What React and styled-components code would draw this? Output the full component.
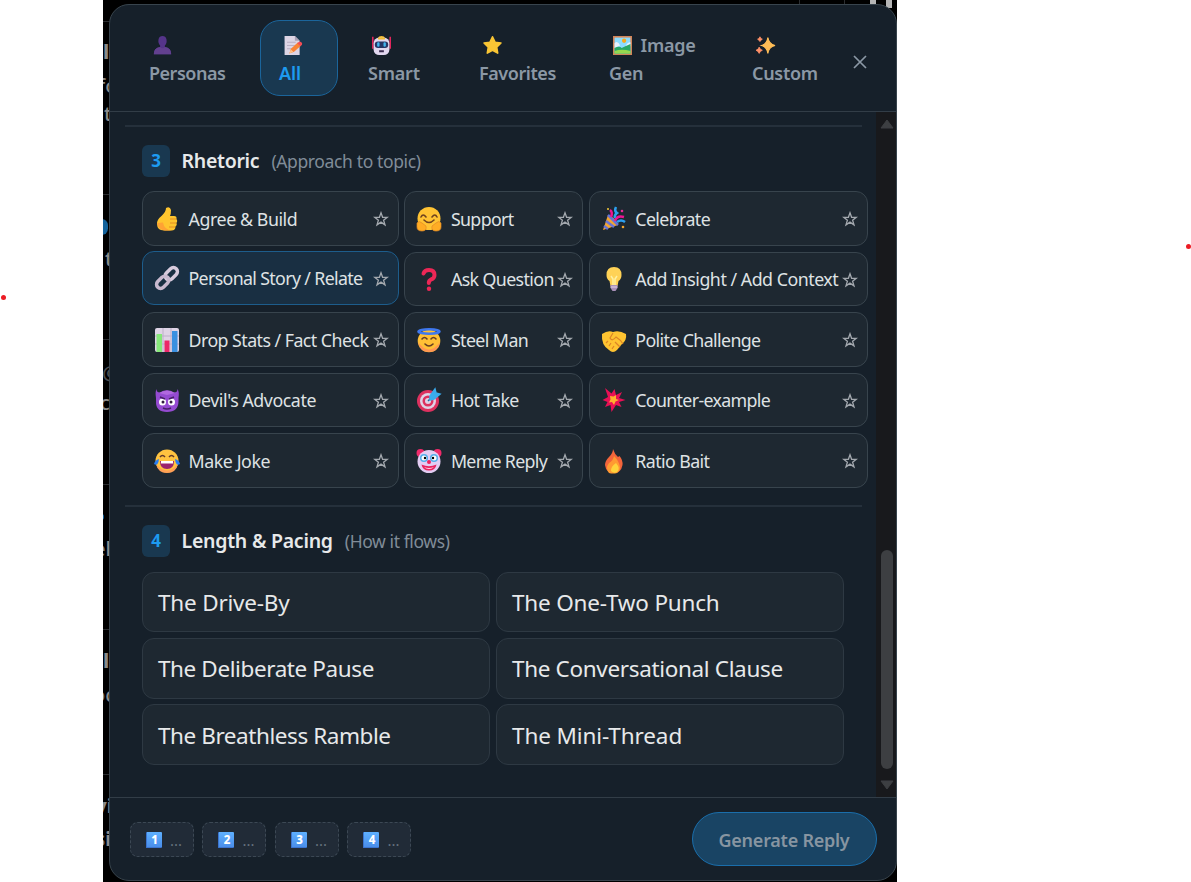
import React from "react";
import styled, { createGlobalStyle, css } from "styled-components";

const Global = createGlobalStyle`
  * { box-sizing: border-box; }
  body { margin: 0; background: #fff; font-family: "Noto Sans", "Open Sans", sans-serif; }
  button { font-family: inherit; margin: 0; cursor: pointer; }
`;

const Stage = styled.div`
  position: relative;
  width: 1191px;
  height: 882px;
  overflow: hidden;
  background: #fff;
  padding-left: 103px;
`;
const Dot = styled.i`
  position: absolute;
  left: ${(p) => p.$x}px;
  top: ${(p) => p.$y}px;
  width: 5px;
  height: 5px;
  border-radius: 50%;
  background: #ec1c24;
`;
const Feed = styled.div`
  position: relative;
  width: 794px;
  height: 882px;
  overflow: hidden;
  background: #000;
  padding: 4px 0 1px 6px;
`;
const Rule = styled.i`
  position: absolute;
  left: 0;
  top: ${(p) => p.$y}px;
  width: 8px;
  height: 1px;
  background: #2b2d30;
`;
const Tick = styled.i`
  position: absolute;
  left: ${(p) => p.$x}px;
  top: 0;
  width: ${(p) => p.$w || 1}px;
  height: ${(p) => p.$h || 4}px;
  background: ${(p) => p.$c || "#2b2d30"};
`;
const Scrap = styled.span`
  position: absolute;
  left: ${(p) => p.$x}px;
  top: ${(p) => p.$y - 12}px;
  line-height: 24px;
  font-size: 20px;
  white-space: nowrap;
  font-weight: ${(p) => (p.$bold ? 800 : 500)};
  color: ${(p) => p.$c || "#8b8b8b"};
`;
const Blob = styled.i`
  position: absolute;
  left: ${(p) => p.$x}px;
  top: ${(p) => p.$y}px;
  width: ${(p) => p.$s}px;
  height: ${(p) => p.$s}px;
  border-radius: 40%;
  background: #14639c;
`;

const Modal = styled.section`
  position: relative;
  display: flex;
  flex-direction: column;
  width: 788px;
  height: 877px;
  border: 1px solid #38444d;
  border-radius: 20px;
  background: #16202a;
  overflow: hidden;
`;
const Header = styled.header`
  display: flex;
  flex: none;
  height: 107px;
  padding: 15px 0 0 20px;
  border-bottom: 1px solid #323d47;
`;
const Tabs = styled.nav`
  display: grid;
  grid-template-columns: 130px 89px 111px 130px 143px 110px;
  height: 76px;
`;
const Tab = styled.button`
  justify-self: start;
  min-width: 78px;
  height: 76px;
  padding: 10px 10px 10px 18px;
  text-align: left;
  font-size: 18px;
  line-height: 28px;
  font-weight: 600;
  letter-spacing: ${(p) => p.$ls}px;
  color: #8b98a5;
  background: none;
  border: 1px solid transparent;
  border-radius: 20px;
  ${(p) =>
    p.$active &&
    css`
      color: #1d9bf0;
      background: #193850;
      border-color: #1b659b;
    `}
`;
const TabLine = styled.span`
  display: flex;
  align-items: center;
  height: 28px;
  gap: 9px;
  white-space: nowrap;
  svg { margin-left: 3.5px; flex: none; }
`;
const Close = styled.button`
  width: 30px;
  height: 30px;
  margin: 26.5px 0 0 2px;
  padding: 0;
  border: 0;
  background: none;
  display: grid;
  place-items: center;
`;

const Body = styled.main`
  display: flex;
  flex: none;
  height: 686px;
  border-bottom: 1px solid #323d47;
`;
const Content = styled.div`
  width: 766px;
  padding: 13px 0 0 15px;
`;
const Scrollbar = styled.aside`
  display: flex;
  flex-direction: column;
  align-items: center;
  width: 20px;
  height: 685px;
  padding: 7px 0 7px 1px;
  background: #18191c;
`;
const Thumb = styled.div`
  width: 12px;
  height: 219px;
  border-radius: 6px;
  margin: auto 0 11px;
  background: #3d3f42;
`;
const Section = styled.section`
  height: ${(p) => p.$h}px;
`;
const Divider = styled.hr`
  width: 737px;
  height: 2px;
  margin: 0 0 0 -0.5px;
  border: 0;
  background: #25303b;
`;
const Heading = styled.div`
  display: flex;
  align-items: center;
  height: 32px;
  margin: ${(p) => p.$top}px 0 ${(p) => p.$bottom}px 17px;
`;
const Step = styled.span`
  width: 28px;
  height: 32px;
  border-radius: 6px;
  background: #193850;
  color: #1d9bf0;
  font-size: 17px;
  line-height: 31px;
  font-weight: 700;
  text-align: center;
`;
const Title = styled.h2`
  margin: 0 0 0 11.5px;
  font-size: 19.5px;
  line-height: 28px;
  font-weight: 600;
  color: #e7e9ea;
  letter-spacing: ${(p) => p.$ls}px;
  white-space: nowrap;
`;
const Hint = styled.span`
  margin-left: 12px;
  font-size: 17.5px;
  line-height: 28px;
  color: #808c98;
  letter-spacing: ${(p) => p.$ls}px;
  white-space: nowrap;
`;
const Grid = styled.div`
  display: grid;
  grid-template-columns: 256.5px 178.5px 279px;
  grid-auto-rows: 54.5px;
  column-gap: 5.9px;
  row-gap: 6px;
  margin-left: 17px;
`;
const Chip = styled.button`
  display: flex;
  align-items: center;
  padding: 1px 8.5px 0 12px;
  border: 1px solid #38444d;
  border-radius: 12px;
  background: #1e2831;
  color: #dfe2e4;
  ${(p) =>
    p.$active &&
    css`
      transform: translateY(-1px);
      border-color: #1d5d8c;
      background: #192f42;
    `}
  > svg { flex: none; }
  > svg:last-child { margin-top: 1px; }
`;
const Label = styled.span`
  flex: 1;
  margin-left: 9.5px;
  text-align: left;
  font-size: 17.8px;
  line-height: 24px;
  letter-spacing: ${(p) => p.$ls}px;
  white-space: nowrap;
`;
const Lengths = styled.div`
  display: grid;
  grid-template-columns: 348px 348px;
  grid-auto-rows: 60.4px;
  gap: 5.8px 6px;
  margin-left: 17px;
`;
const LengthCard = styled.button`
  padding: 1px 15px 0;
  text-align: left;
  font-size: 22.5px;
  color: #e7e9ea;
  letter-spacing: ${(p) => p.$ls}px;
  white-space: nowrap;
  border: 1px solid #2e3943;
  border-radius: 12px;
  background: #1e2831;
`;

const Footer = styled.footer`
  display: flex;
  flex: 1;
  padding: 14px 19px 0 20px;
  justify-content: space-between;
`;
const Slots = styled.div`
  display: flex;
  gap: 8.8px;
  margin-top: 10px;
`;
const Slot = styled.div`
  display: flex;
  align-items: center;
  gap: 8px;
  width: 63.7px;
  height: 35px;
  padding-left: 15px;
  border: 1px dashed #3c4854;
  border-radius: 8px;
  background: #212b37;
  color: #66727e;
  font-size: 15px;
  line-height: 30px;
`;
const Generate = styled.button`
  width: 185px;
  height: 54px;
  border: 1px solid #1a6eab;
  border-radius: 27px;
  background: #194464;
  color: #8795a1;
  font-size: 18px;
  font-weight: 600;
  letter-spacing: -0.25px;
  padding: 2px 1px 0 0;
`;

const art = {
  persona: <><path d="M1 23q0-8 8-9v-2Q6 9 7 4q1-4 5-4t5 4q1 5-2 8v2q8 1 8 9z" fill="#55348a" /><path d="M1 23q0-8 8-9 3 3 6 0 8 1 8 9z" fill="#62408f" /></>,
  memo: <><path d="M2 0h13l6 6v18H2z" fill="#dcd5e5" /><path d="M15 0v6h6z" fill="#aaa0b5" /><path d="M5 8h11M5 12h10M5 16h7" stroke="#b9afc3" strokeWidth="1.3" /><path d="m8 22 2-6 9-8 4 4-9 8z" fill="#f98335" /><path d="m18 9 3-2q4 1 3 4l-2 2z" fill="#f24c55" /><path d="m8 22 2-5 3 3z" fill="#ffc48b" /></>,
  robot: <><path d="M1 1v15M23 1v15" stroke="#e2255c" strokeWidth="2" /><path d="M8 3q0-3 4-3t4 3z" fill="#f2bc31" /><rect x="2" y="2" width="20" height="22" rx="7" fill="#e2d7ef" /><path d="M7 2.500q5-2 10 0l-1 2H8z" fill="#f2bc31" /><rect x="3.500" y="7" width="17" height="8" rx="4" fill="#263766" /><rect x="6.500" y="8" width="3" height="5.500" rx="1.500" fill="#43b5ef" /><rect x="14.500" y="8" width="3" height="5.500" rx="1.500" fill="#43b5ef" /><path d="M9 18h6v2.500H9z" fill="#38294d" /></>,
  star: <path d="m12 1 3.2 6.8 7.5 1-5.4 5.3 1.3 7.6-6.6-3.6-6.6 3.6 1.3-7.6-5.4-5.3 7.5-1z" fill="#f9c534" stroke="#f9c534" strokeWidth="2" strokeLinejoin="round" />,
  image: <><rect width="24" height="24" fill="#d28458" /><rect x="2" y="2" width="20" height="20" fill="#8cdcff" /><circle cx="14" cy="6" r="2.700" fill="#f7a91c" /><path d="M2 9q4-4 7 3l-7 3zM22 8q-4 0-6 5h6z" fill="#e8f1ff" /><path d="M2 15q6-3 9 0 4-2 11-5v12H2z" fill="#28a866" /><path d="M2 19q9-3 20 0v3H2z" fill="#95d94e" /></>,
  sparkles: <><path d="M15 2q1 8 9 10-8 2-9 10-1-8-8-10 7-2 8-10z" fill="#ffbd56" stroke="#ffbd56" strokeWidth="1.500" /><path d="M4 14q1 3.500 4 4-3 1-4 4-1-3-4-4 3-.5 4-4zM5 1q1 3 3 3-2 1-3 3-1-2-3-3 2 0 3-3z" fill="#ff9068" stroke="#ff9068" /></>,
  thumb: <><path d="M11 1q4-2 5 2 0 4-1 6h4q3 0 2.500 3 1.500 2 0 4 1 2-1 3.500 0 4-4 4H9q-7 0-7-7 0-4 5-8 4-4 4-7.500z" fill="#ffc52e" /><path d="M15 12h6M15 16h6M14 20h6" stroke="#e38f22" strokeWidth="1" /><path d="M2 16q1 7 8 7.500h7q-8-1-9-8z" fill="#ffa334" /></>,
  link: <g fill="none" strokeWidth="3.500" strokeLinecap="round"><rect x="-4" y="-7" width="8" height="14" rx="4" transform="translate(16.300 7.700) rotate(45)" stroke="#d7cbdd" /><rect x="-4" y="-7" width="8" height="14" rx="4" transform="translate(7.700 16.300) rotate(45)" stroke="#c8b9cf" /></g>,
  chart: <><rect width="24" height="24" rx="2" fill="#dfd4e6" /><path d="M0 8h24M0 16h24M8 0v24M16 0v24" stroke="#bdb0c9" /><rect x="1.500" y="6" width="5.500" height="18" fill="#86e77a" /><rect x="9.500" y="12.500" width="5" height="11.500" fill="#ed2868" /><rect x="17" y="3" width="5.500" height="21" fill="#3a90e0" /></>,
  devil: <><path d="M1.500 1q0 3.500 3.500 3.500 7-4.500 14 0 3.500 0 3.500-3.500 2 3 1 9v3q0 11-11.500 11T1 13v-3q-1-6 .5-9z" fill="#954bd1" /><path d="M4 5q8-5 16 0L12 7z" fill="#b168df" /><circle cx="7.500" cy="14" r="3.500" fill="#fff" /><circle cx="16.500" cy="14" r="3.500" fill="#fff" /><circle cx="8" cy="14" r="1.500" fill="#321d40" /><circle cx="16" cy="14" r="1.500" fill="#321d40" /><path d="m5 9 5 2M19 9l-5 2M8 20q4 2 8 0" stroke="#472267" strokeWidth="1.500" fill="none" /></>,
  joy: <><circle cx="12" cy="12" r="11.500" fill="#ffc340" /><path d="M1 15q11 13 22 0-2 9-11 9T1 15z" fill="#ff9f55" /><path d="M5 8q2.500-3 5 0M14 8q2.500-3 5 0" fill="none" stroke="#623a2a" strokeWidth="1.500" /><path d="M5 12h14q0 8-7 8t-7-8z" fill="#9b236d" /><path d="M6 12h12v2.500H6z" fill="#fff" /><path d="M4 10q-4 1-5 5 4 3 5-5zM20 10q4 1 5 5-4 3-5-5z" fill="#287df2" /></>,
  hug: <><circle cx="12" cy="11.500" r="11.500" fill="#ffc333" /><path d="M4 10q2-4 5 0M15 10q3-4 5 0M7 13q5 5 10 0" fill="none" stroke="#6f431f" strokeWidth="1.600" strokeLinecap="round" /><path d="M0 16q2-3 5 0l4 3q1 5-4 5-5 0-5-4zM24 16q-2-3-5 0l-4 3q-1 5 4 5 5 0 5-4z" fill="#ffac24" stroke="#e28927" strokeWidth=".7" /></>,
  question: <><path d="M6.500 6.500Q7.500 3 12 3q5.500 0 5.500 5 0 3.500-3.500 4.500-2.200 1-2.200 3.500" fill="none" stroke="#ed2756" strokeWidth="4" strokeLinecap="round" /><circle cx="12" cy="21.800" r="2.200" fill="#ed2756" /></>,
  halo: <><circle cx="12" cy="13" r="11.300" fill="#ffc035" /><path d="M1 14q11 15 22 0-2 10-11 10T1 14z" fill="#ff9654" /><ellipse cx="12" cy="3.500" rx="10.500" ry="2.200" fill="none" stroke="#3f78ee" strokeWidth="2.600" /><path d="M5 11q2.500-3 5 0M14 11q2.500-3 5 0M8 16q4 4 8 0" fill="none" stroke="#683f22" strokeWidth="1.600" strokeLinecap="round" /></>,
  target: <><circle cx="11" cy="13" r="11" fill="#dd315f" /><circle cx="11" cy="13" r="8" fill="#ded3e6" /><circle cx="11" cy="13" r="5.500" fill="#dd315f" /><circle cx="11" cy="13" r="3" fill="#ded3e6" /><path d="m11 13 6-6" stroke="#20659d" strokeWidth="1.500" /><path d="m13 8 5-7 1 4 4 1-6 5-4 1z" fill="#3aabed" stroke="#3aabed" strokeWidth="1.500" /></>,
  clown: <><circle cx="3.500" cy="4" r="4" fill="#f02b6b" /><circle cx="20.500" cy="4" r="4" fill="#f02b6b" /><circle cx="12" cy="12.500" r="11.500" fill="#e3cdf3" /><circle cx="7" cy="9" r="4" fill="#53adea" /><circle cx="17" cy="9" r="4" fill="#53adea" /><circle cx="7" cy="9" r="2.500" fill="#fff" /><circle cx="17" cy="9" r="2.500" fill="#fff" /><circle cx="8" cy="9" r="1.200" /><circle cx="16" cy="9" r="1.200" /><circle cx="12" cy="13" r="2" fill="#ed205e" /><path d="M4.500 15.500q7.500 3.500 15 0-1 6-7.500 6t-7.500-6z" fill="#e92460" /><path d="M7 18q5 2 10 0-2 2-5 2t-5-2z" fill="#ffdce8" /></>,
  party: <><path d="m1 23 5-15q7 2 10 10z" fill="#f3a52f" /><path d="m4 14 8 6M2 19l4 3M6 8l10 10" stroke="#6873d5" strokeWidth="2.500" /><path d="M8 3q3 2 1 7M13 14q2-6 9-4" fill="none" stroke="#ed1593" strokeWidth="2.500" /><path d="M14 0q-2 4 1 6-3 2-2 5M15 15q4-3 8 0" fill="none" stroke="#2c9fee" strokeWidth="2.500" /><circle cx="6" cy="2" r="1" fill="#f4ca38" /><circle cx="20" cy="4" r="1.300" fill="#ee299a" /><circle cx="21" cy="20" r="1.300" fill="#f3a52f" /></>,
  bulb: <><path d="M4.500 8q0-8 7.500-8t7.500 8q0 4-3 6l-1 5h-7l-1-5q-3-2-3-6z" fill="#ffd256" /><path d="m9 9 2 3v7M15 9l-2 3v7" fill="none" stroke="#fff0a1" strokeWidth="1.500" /><path d="M8.500 18h7v3l-2 3h-3l-2-3z" fill="#a990b8" /><path d="M8.500 20h7" stroke="#e4d2ed" /></>,
  hands: <><path d="M0 6q6-4 11-2 6-2 13 2 1 6-4 10l-5 6q-4 4-8 0-8-5-7-16z" fill="#ffc431" /><path d="M11 5 8 10q2 4 6-1 5 3 7 7M4 15l2-2M7 18l2-3M10 21l2-3M13 14l5 5" fill="none" stroke="#dc8427" strokeWidth="1.200" /></>,
  burst: <><path d="m3 0 6.500 5.500L12.500 1l1.500 6 6-3-3 6 6.500 2-6.500 2 2.500 5-5.500-2-4.500 7-1-7-5.500 2 2.500-5-5-2 5.500-3z" fill="#e91055" /><path d="m8 8 3.500.5L14 7v4l3 1-3.500 1.500L12 17l-2-3-3 .5 1.500-3z" fill="#ffb02e" /></>,
  fire: <><path d="M11 0q1.500 5 5 8l1.500-1q3.500 4 3 9-1.500 8-8.500 8-8 0-9-8 0-4 4-8 4-4 4-8z" fill="#f3653b" /><path d="M7 24q-4-5 0-10 4-2 5-7 5 5 6 11 0 4-3 6-4 1-8 0z" fill="#ff9a32" /><path d="M9 22q0-5 5-8 5 6 1 9-3 2-6-1z" fill="#ffd33b" /></>,
};

const Emoji = ({ name, size = 24 }) => (
  <svg width={size} height={size} viewBox="0 0 24 24" overflow="visible">{art[name]}</svg>
);
const Star = () => (
  <svg width="16" height="16" viewBox="0 0 16 16">
    <path d="m8 1.800 1.600 4.500h4.700l-3.700 2.900 1.400 4.700L8 11.100l-4 2.800 1.400-4.700-3.700-2.900h4.700z" fill="none" stroke="#a3a8ae" strokeWidth="1.300" />
  </svg>
);
const KeycapBox = styled.span`
  display: grid;
  place-items: center;
  width: 16px;
  height: 16px;
  border-radius: 1px;
  background: linear-gradient(#5eb0ff, #4a8eea);
  border-left: 1px solid #3c74cf;
  border-bottom: 1px solid #3c74cf;
  color: #fff;
  font-size: 11.5px;
  line-height: 15px;
  font-weight: 800;
`;

const tabs = [
  { icon: "persona", name: "Personas", ls: -0.5 },
  { icon: "memo", name: "All", ls: -0.1 },
  { icon: "robot", name: "Smart", ls: -0.2 },
  { icon: "star", name: "Favorites", ls: -0.43 },
  { icon: "image", name: "Gen", first: "Image", ls: -0.25 },
  { icon: "sparkles", name: "Custom", ls: -0.3 },
];
const rhetoric = [
  ["thumb", "Agree & Build", -0.42],
  ["hug", "Support", -0.65],
  ["party", "Celebrate", -0.6],
  ["link", "Personal Story / Relate", -0.65],
  ["question", "Ask Question", -0.6],
  ["bulb", "Add Insight / Add Context", -0.48],
  ["chart", "Drop Stats / Fact Check", -0.54],
  ["halo", "Steel Man", -0.58],
  ["hands", "Polite Challenge", -0.62],
  ["devil", "Devil's Advocate", -0.44],
  ["target", "Hot Take", -0.65],
  ["burst", "Counter-example", -0.66],
  ["joy", "Make Joke", -0.42],
  ["clown", "Meme Reply", -0.7],
  ["fire", "Ratio Bait", -0.58],
];
const lengths = [
  ["The Drive-By", -0.2],
  ["The One-Two Punch", -0.19],
  ["The Deliberate Pause", -0.4],
  ["The Conversational Clause", -0.34],
  ["The Breathless Ramble", -0.43],
  ["The Mini-Thread", -0.1],
];

export default function App() {
  return (
    <Stage>
      <Global />
      <Dot $x={1} $y={294.5} />
      <Dot $x={1186} $y={244} />
      <Feed>
        {[21, 194, 339, 484, 629, 774].map((y) => <Rule key={y} $y={y} />)}
        <Tick $x={696} />
        <Tick $x={741} />
        <Tick $x={767} $w={6} $h={6} $c="#b5b5b5" />
        <Tick $x={783} $w={6} $h={8} $c="#b5b5b5" />
        <Scrap $x={0} $y={52} $bold>l</Scrap>
        <Scrap $x={-5} $y={86}>fo</Scrap>
        <Scrap $x={1} $y={114}>t</Scrap>
        <Blob $x={-11} $y={219} $s={16} />
        <Scrap $x={2} $y={259}>t</Scrap>
        <Scrap $x={-1} $y={373} $c="#4c4f52">@</Scrap>
        <Scrap $x={-3} $y={403}>c</Scrap>
        <Blob $x={-5} $y={514} $s={6} />
        <Scrap $x={-9} $y={549}>el</Scrap>
        <Scrap $x={0} $y={661} $bold>l</Scrap>
        <Scrap $x={-10} $y={695}>oc</Scrap>
        <Scrap $x={-8} $y={806} $bold>vi</Scrap>
        <Scrap $x={-8} $y={839} $bold>si</Scrap>
        <Modal>
          <Header>
            <Tabs>
              {tabs.map(({ icon, name, first, ls }) => (
                <Tab key={name} $active={name === "All"} $ls={ls}>
                  <TabLine><Emoji name={icon} size={19} />{first}</TabLine>
                  <TabLine>{name}</TabLine>
                </Tab>
              ))}
            </Tabs>
            <Close aria-label="Close">
              <svg width="14" height="14" viewBox="0 0 14 14"><path d="m1 1 12 12M13 1 1 13" stroke="#8b98a5" strokeWidth="1.700" /></svg>
            </Close>
          </Header>
          <Body>
            <Content>
              <Section $h={380}>
                <Divider />
                <Heading $top={18} $bottom={14}>
                  <Step>3</Step>
                  <Title $ls={-0.28}>Rhetoric</Title>
                  <Hint $ls={-0.37}>(Approach to topic)</Hint>
                </Heading>
                <Grid>
                  {rhetoric.map(([icon, name, ls]) => (
                    <Chip key={name} $active={icon === "link"}>
                      <Emoji name={icon} />
                      <Label $ls={ls}>{name}</Label>
                      <Star />
                    </Chip>
                  ))}
                </Grid>
              </Section>
              <Section $h={290}>
                <Divider />
                <Heading $top={18} $bottom={15}>
                  <Step>4</Step>
                  <Title $ls={-0.25}>Length &amp; Pacing</Title>
                  <Hint $ls={-0.4}>(How it flows)</Hint>
                </Heading>
                <Lengths>
                  {lengths.map(([name, ls]) => <LengthCard key={name} $ls={ls}>{name}</LengthCard>)}
                </Lengths>
              </Section>
            </Content>
            <Scrollbar>
              <svg width="14" height="10" viewBox="0 0 14 10"><path d="M7 1 13 9H1z" fill="#3d3f42" stroke="#3d3f42" strokeLinejoin="round" /></svg>
              <Thumb />
              <svg width="14" height="10" viewBox="0 0 14 10"><path d="M1 1h12L7 9z" fill="#3d3f42" stroke="#3d3f42" strokeLinejoin="round" /></svg>
            </Scrollbar>
          </Body>
          <Footer>
            <Slots>
              {[1, 2, 3, 4].map((n) => <Slot key={n}><KeycapBox>{n}</KeycapBox>...</Slot>)}
            </Slots>
            <Generate>Generate Reply</Generate>
          </Footer>
        </Modal>
      </Feed>
    </Stage>
  );
}
